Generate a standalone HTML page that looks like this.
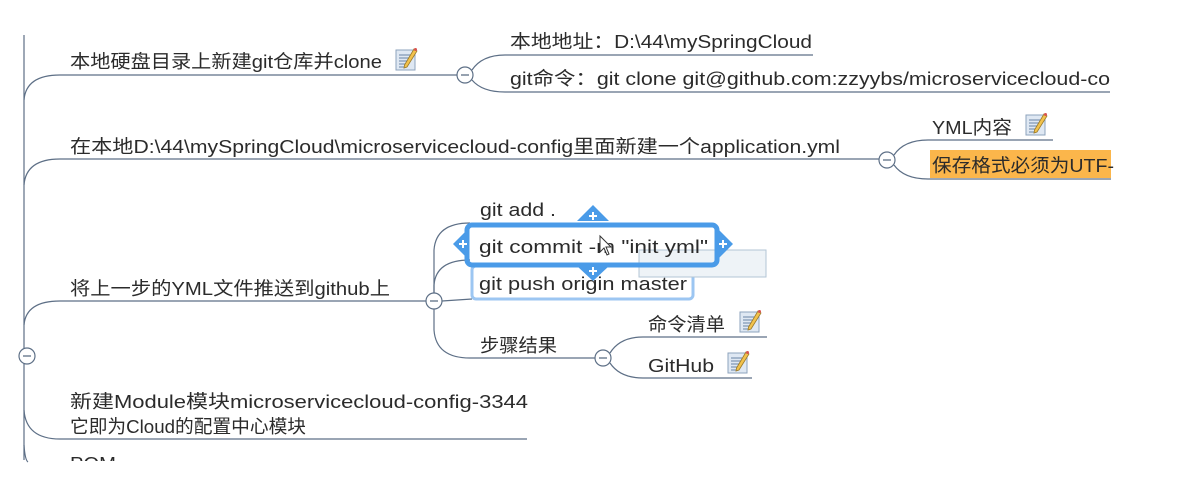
<!DOCTYPE html>
<html><head><meta charset="utf-8"><style>
html,body{margin:0;padding:0;background:#fff;width:1181px;height:483px;overflow:hidden}
svg{display:block}
text{font-family:"Liberation Sans","Noto Sans CJK SC",sans-serif;font-size:18.5px;fill:#2b2b2b}
</style></head><body>
<svg width="1181" height="483" viewBox="0 0 1181 483" xmlns="http://www.w3.org/2000/svg">
<defs>
<g id="note">
<rect x="0" y="0" width="19" height="20" fill="#dfe8f3" stroke="#8ea3bd" stroke-width="1"/>
<g stroke="#7d94b3" stroke-width="1.2"><line x1="3" y1="5" x2="14" y2="5"/><line x1="3" y1="8" x2="14" y2="8"/><line x1="3" y1="11" x2="12" y2="11"/><line x1="3" y1="14" x2="10" y2="14"/><line x1="3" y1="17" x2="10" y2="17"/></g>
<path d="M18 -1 L21 1 L11 17 L8 18 L8.5 15 Z" fill="#f2c24c" stroke="#9a7a2a" stroke-width="0.8"/>
<circle cx="19.5" cy="-0.5" r="1.5" fill="#d9534f"/>
</g>
<g id="coll"><circle r="8" fill="#fff" stroke="#5d6f86" stroke-width="1.2"/><line x1="-4" y1="0" x2="4" y2="0" stroke="#5d6f86" stroke-width="1.3"/></g>
</defs>
<g fill="none" stroke="#5d6f86" stroke-width="1.2">
<line x1="24" y1="35" x2="24" y2="460"/>
<path d="M24 100 Q26 75 60 75 L457 75"/>
<path d="M472 70 Q482 55 505 55 L813 55"/>
<path d="M472 80 Q482 92 505 92 L1110 92"/>
<path d="M24 185 Q26 159 60 159 L879 159"/>
<path d="M894 155 Q904 140 928 140 L1053 140"/>
<path d="M894 165 Q904 179 928 179 L1111 179"/>
<path d="M24 325 Q26 301 60 301 L426 301"/>
<path d="M434 293 L434 250 Q436 223 470 223"/>
<path d="M434 293 L434 285 Q436 260 470 260"/>
<path d="M442 301 L472 299"/>
<path d="M434 309 L434 330 Q436 358 470 358 L595 358"/>
<path d="M610 353 Q620 337 643 337 L767 337"/>
<path d="M610 363 Q620 378 643 378 L752 378"/>
<path d="M24 410 Q26 439 60 439 L527 439"/>
<path d="M24 445 Q25 460 28 462"/>
</g>
<use href="#coll" x="465" y="75"/>
<use href="#coll" x="887" y="160"/>
<use href="#coll" x="434" y="301"/>
<use href="#coll" x="603" y="358"/>
<use href="#coll" x="27" y="356"/>
<text x="70" y="68" textLength="312" lengthAdjust="spacingAndGlyphs">本地硬盘目录上新建git仓库并clone</text>
<use href="#note" x="396" y="50"/>
<text x="510" y="48" textLength="302" lengthAdjust="spacingAndGlyphs">本地地址：D:\44\mySpringCloud</text>
<text x="510" y="85" textLength="600" lengthAdjust="spacingAndGlyphs">git命令：git clone git@github.com:zzyybs/microservicecloud-co</text>
<text x="70" y="153" textLength="770" lengthAdjust="spacingAndGlyphs">在本地D:\44\mySpringCloud\microservicecloud-config里面新建一个application.yml</text>
<text x="932" y="134" textLength="80" lengthAdjust="spacingAndGlyphs">YML内容</text>
<use href="#note" x="1026" y="115"/>
<rect x="930" y="150" width="181" height="28" fill="#fbb64b"/>
<text x="932" y="172" textLength="182" lengthAdjust="spacingAndGlyphs">保存格式必须为UTF-</text>
<text x="70" y="295" textLength="320" lengthAdjust="spacingAndGlyphs">将上一步的YML文件推送到github上</text>
<text x="480" y="216" textLength="76" lengthAdjust="spacingAndGlyphs">git add .</text>
<rect x="472" y="266" width="221" height="33" rx="4" fill="none" stroke="#9cc6f2" stroke-width="3"/>
<rect x="639" y="250" width="127" height="27" fill="#eef3f7" stroke="#b3c6d6" stroke-width="1"/>
<g fill="#4a9be8">
<path d="M593 205 L609 221 L577 221 Z"/>
<path d="M593 281 L609 266 L577 266 Z"/>
<path d="M453 244 L467 230 L467 258 Z"/>
<path d="M733 244 L719 230 L719 258 Z"/>
</g>
<rect x="467" y="225" width="250" height="40" rx="5" fill="none" stroke="#4a9be8" stroke-width="5"/>
<g stroke="#fff" stroke-width="2"><line x1="589" y1="216" x2="597" y2="216"/><line x1="593" y1="212" x2="593" y2="220"/>
<line x1="589" y1="271" x2="597" y2="271"/><line x1="593" y1="267" x2="593" y2="275"/>
<line x1="459" y1="244" x2="467" y2="244"/><line x1="463" y1="240" x2="463" y2="248"/>
<line x1="719" y1="244" x2="727" y2="244"/><line x1="723" y1="240" x2="723" y2="248"/></g>
<text x="479" y="253" textLength="229" lengthAdjust="spacingAndGlyphs">git commit -m "init yml"</text>
<path d="M600 236 L600 252 L604 248 L607 255 L609 254 L606 247 L611 247 Z" fill="#fff" stroke="#333" stroke-width="1"/>
<text x="479" y="290" textLength="208" lengthAdjust="spacingAndGlyphs">git push origin master</text>
<text x="480" y="352" textLength="77" lengthAdjust="spacingAndGlyphs">步骤结果</text>
<text x="648" y="331" textLength="77" lengthAdjust="spacingAndGlyphs">命令清单</text>
<use href="#note" x="740" y="312"/>
<text x="648" y="372" textLength="66" lengthAdjust="spacingAndGlyphs">GitHub</text>
<use href="#note" x="728" y="353"/>
<text x="70" y="408" textLength="458" lengthAdjust="spacingAndGlyphs">新建Module模块microservicecloud-config-3344</text>
<text x="70" y="433" textLength="236" lengthAdjust="spacingAndGlyphs">它即为Cloud的配置中心模块</text>
<svg x="0" y="0" width="1181" height="461"><text x="70" y="470" textLength="46" lengthAdjust="spacingAndGlyphs">POM</text></svg>
</svg>
</body></html>
